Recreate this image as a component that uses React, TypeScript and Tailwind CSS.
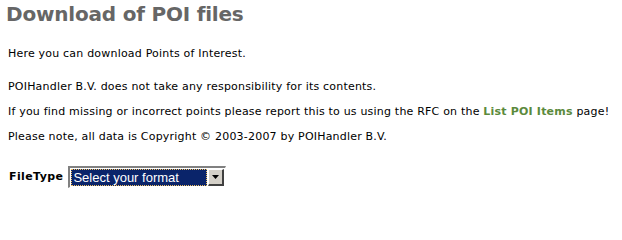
export default function App() {
  return (
    <div className="w-[622px] h-[200px] bg-white pt-[2px] text-black font-['Verdana','DejaVu_Sans',sans-serif]">
      <h1 className="pl-[6px] text-[20px] leading-[24px] font-bold tracking-[-0.2px] text-[#666666]">
        Download of POI files
      </h1>
      <div className="pl-[8px] text-[11px] leading-[14px] tracking-[0.2px]">
        <p className="mt-[21px]">Here you can download Points of Interest.</p>
        <p className="mt-[19px]">POIHandler B.V. does not take any responsibility for its contents.</p>
        <p className="mt-[11px]">
          If you find missing or incorrect points please report this to us using the RFC on the{" "}
          <a href="#" className="font-bold text-[#5b8a3c]">
            List POI Items
          </a>{" "}
          page!
        </p>
        <p className="mt-[11px]">Please note, all data is Copyright © 2003-2007 by POIHandler B.V.</p>
      </div>
      <div className="mt-[22px] flex items-center pl-[9px] gap-[5px]">
        <label className="text-[11px] font-bold leading-[14px] tracking-[0.4px]">FileType</label>
        <div className="flex h-[22px] w-[158px] border-t-2 border-l-2 border-r border-b border-t-[#808080] border-l-[#808080] border-r-white border-b-white">
          <div className="flex flex-1 p-[1px] bg-white">
            <div className="flex flex-1 items-center bg-[#0a246a] outline-1 outline-dotted outline-[#f0c060] -outline-offset-1 pl-[2px] text-white text-[13px] leading-none font-['Arial','Liberation_Sans',sans-serif]">
              Select your format
            </div>
          </div>
          <div className="flex w-[16px] items-center justify-center bg-[#d4d0c8] border-t border-l border-r-2 border-b-2 border-t-white border-l-white border-r-[#404040] border-b-[#404040] my-[1px] mr-[1px]">
            <svg width="7" height="4" viewBox="0 0 7 4">
              <path d="M0 0h7L3.5 4z" fill="#000" />
            </svg>
          </div>
        </div>
      </div>
    </div>
  );
}
